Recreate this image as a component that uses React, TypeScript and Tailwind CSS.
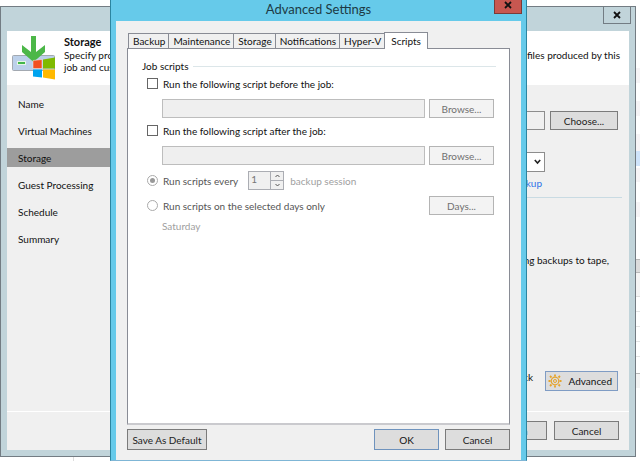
import React from "react";

const FONT = "font-['Lato','Open_Sans',sans-serif]";
const BTN =
  "flex shrink-0 items-center justify-center whitespace-nowrap border border-[#7b7b7b] bg-[#dddddd] leading-none text-[#222]";
const BTN_OFF =
  "flex h-[19px] w-[65px] shrink-0 items-center justify-center border border-[#b4b4b4] bg-[#f3f3f3] leading-none text-[#707070]";

const steps = ["Name", "Virtual Machines", "Storage", "Guest Processing", "Schedule", "Summary"];
const tabs = ["Backup", "Maintenance", "Storage", "Notifications", "Hyper-V"];

function StorageIcon() {
  return (
    <svg width="46" height="46" viewBox="0 0 46 46" aria-hidden="true">
      <rect x="1.500" y="20.500" width="42" height="15" rx="1" fill="#bcd0ea" stroke="#a3a9b1" />
      <rect x="6.500" y="26.500" width="8" height="3" fill="#43b649" stroke="#e6f5e6" />
      <path d="M20 1h5v16l9-7v7L22.500 27 11 17v-7l9 7z" fill="#4cb748" />
      <path d="M22 25.500l9-1v9h-9z" fill="#f25022" stroke="#f0f0f0" strokeWidth=".5" />
      <path d="M32 24.500l12-2v11H32z" fill="#7fba00" />
      <path d="M22 34.500h9v8l-9-1z" fill="#00a4ef" />
      <path d="M32 34.500h12v10l-12-2z" fill="#ffb900" />
    </svg>
  );
}

function GearIcon() {
  return (
    <svg width="14" height="14" viewBox="0 0 14 14" fill="none" stroke="#e5a42c" aria-hidden="true">
      <circle cx="7" cy="7" r="3.800" strokeWidth="1.200" />
      <circle cx="7" cy="7" r="1.500" strokeWidth="1" />
      <path d="M7 .5v2M7 11.500v2M.5 7h2M11.500 7h2M2 2l1.500 1.500M10.500 10.500L12 12M12 2l-1.500 1.500M3.500 10.500L2 12" strokeWidth="1.800" />
    </svg>
  );
}

function CloseGlyph() {
  return (
    <svg width="8" height="8" viewBox="0 0 8 8" stroke="#111" strokeWidth="1.800" aria-hidden="true">
      <path d="M1 1l6 6M7 1L1 7" />
    </svg>
  );
}

function ConsoleBehind() {
  return (
    <div className="flex h-full flex-col">
      <div className="ml-auto flex w-1 flex-col pt-[68px]">
        <div className="h-[15px] bg-[#f6f4f6]" />
        <div className="mt-[18px] h-[15px] bg-[#f6f4f6]" />
        <div className="mt-[18px] h-[17px] bg-[#f6f4f6]" />
        <div className="h-[15px] bg-[#cfe4fb]" />
        <div className="mt-[2px] h-[14px] bg-[#f6f4f6]" />
        <div className="mt-5 h-[15px] bg-[#f6f4f6]" />
        <div className="mt-[42px] h-[14px] border-y border-[#b9b9b9] bg-[#dcdcdc]" />
        <div className="h-6 border-b border-[#dddddd] bg-[#f4f4f4]" />
        <div className="h-[15px] border-b border-[#e4e4e4]" />
        <div className="h-[15px] border-b border-[#e4e4e4]" />
        <div className="h-[15px] border-b border-[#e4e4e4]" />
        <div className="h-[15px] border-b border-[#e4e4e4]" />
        <div className="h-[17px] border-b border-[#b9b9b9]" />
        <div className="h-[14px] bg-[#f4f4f4]" />
      </div>
      <div className="mt-auto h-1 w-[74px] border-r border-[#dddddd]" />
    </div>
  );
}

function ScriptRow({ id, label }: { id: string; label: string }) {
  return (
    <div>
      <div className="flex h-[13px] items-center gap-[5px]">
        <input id={id} type="checkbox" className="size-[11px] shrink-0 appearance-none border border-[#666] bg-white" />
        <label htmlFor={id}>{label}</label>
      </div>
      <div className="mt-[9px] flex gap-1 pl-[15px]">
        <input aria-label={label} disabled className="h-[19px] min-w-0 flex-1 border border-[#bdbdbd] bg-[#efefef]" />
        <button disabled className={BTN_OFF}>Browse...</button>
      </div>
    </div>
  );
}

function Wizard() {
  return (
    <section className="absolute top-[6px] right-[4px] left-0 flex h-[451px] flex-col border border-[#737c83] bg-[#c1d4da] px-[6px] pb-[6px]">
      <div className="flex h-6 shrink-0 justify-end">
        <button aria-label="Close wizard" className="-mt-px mr-[-2px] flex h-[18px] w-[28px] items-center justify-center border border-[#737c83]">
          <CloseGlyph />
        </button>
      </div>
      <header className="flex h-[54px] shrink-0 bg-white pl-1">
        <div className="w-[53px] shrink-0 pt-1">
          <StorageIcon />
        </div>
        <div className="min-w-0 flex-1 pt-1 pr-[9px] leading-3">
          <h1 className="text-[11px] leading-[14px] font-bold">Storage</h1>
          <div className="flex justify-between whitespace-nowrap">
            <span>Specify pro</span>
            <span>files produced by this</span>
          </div>
          <p>job and cus</p>
        </div>
      </header>
      <div className="flex min-h-0 flex-1 bg-[#f0f0f0]">
        <nav className="flex w-[110px] shrink-0 flex-col gap-2 pt-[9px]">
          {steps.map((s) => (
            <a
              key={s}
              href="#"
              className={
                s === "Storage"
                  ? "flex h-[19px] items-center bg-[#9d9d9d] pl-[11px]"
                  : "flex h-[19px] items-center pl-[11px]"
              }
            >
              {s}
            </a>
          ))}
        </nav>
        <div className="flex min-w-0 flex-1 flex-col pr-[11px] whitespace-nowrap">
          <div className="mt-[26px] flex gap-[5px]">
            <input aria-label="Backup proxy" className="h-[19px] min-w-0 flex-1 border border-[#8d8d8d] bg-[#f0f0f0]" />
            <button className={`${BTN} h-[19px] w-[68px]`}>Choose...</button>
          </div>
          <div className="mt-[22px] mr-[73px] flex">
            <div className="relative flex flex-1">
              <select aria-label="Backup repository" className="h-5 flex-1 appearance-none border border-[#8d8d8d] bg-white">
                <option></option>
              </select>
              <svg className="absolute top-[7px] right-[4px]" width="7" height="6" viewBox="0 0 7 6" fill="none" stroke="#222" strokeWidth="1.600" aria-hidden="true">
                <path d="M.8 1l2.700 3L6.200 1" />
              </svg>
            </div>
          </div>
          <a href="#" className="mt-[3px] mr-[76px] text-right leading-4 text-[#2f74e8]">backup</a>
          <hr className="mt-[6px] -mr-1 border-[#c9dbe3]" />
          <p className="mt-[54px] mr-[9px] text-right leading-4">ing backups to tape,</p>
          <div className="mt-[103px] flex items-start justify-end gap-3">
            <span className="leading-3">block</span>
            <button className="flex h-5 w-[73px] shrink-0 items-center justify-between border border-[#7f9cc4] bg-[#dddddd] pr-[5px] pl-[2px] leading-none">
              <GearIcon />
              Advanced
            </button>
          </div>
        </div>
      </div>
      <footer className="flex h-[39px] shrink-0 items-start justify-end gap-[7px] border-t border-white bg-[#f0f0f0] pt-[9px] pr-[10px]">
        <button className={`${BTN} h-[19px] w-[65px]`}>Finish</button>
        <button className={`${BTN} h-[19px] w-[65px]`}>Cancel</button>
      </footer>
    </section>
  );
}

function AdvancedSettings() {
  return (
    <section className="absolute top-0 right-[113px] bottom-0 left-[110px] flex flex-col border-x border-x-[#2c85a0] border-b border-b-[#7fb6d6] bg-[#66caea] px-[5px]">
      <div className="relative flex h-[21px] shrink-0 items-start justify-center">
        <h2 className="text-[13px] leading-[18px] text-[#1d3a45]">Advanced Settings</h2>
        <button aria-label="Close" className="absolute top-0 right-[-1px] flex h-[14px] w-[28px] items-center justify-center border border-t-0 border-[#7b3a38] bg-[#c75750] pb-1">
          <CloseGlyph />
        </button>
      </div>
      <div className="flex min-h-0 flex-1 flex-col bg-[#f0f0f0] px-[11px] pt-[11px] pb-[10px]">
        <div role="tablist" className="relative z-10 -mb-px flex h-[17px] shrink-0 items-end pl-px">
          {tabs.map((t) => (
            <button key={t} role="tab" className="-mr-px flex h-4 items-center border border-[#898c95] pr-[3px] pl-1 leading-none">
              {t}
            </button>
          ))}
          <button role="tab" aria-selected="true" className="h-[17px] border border-b-0 border-[#898c95] bg-white px-[6px] leading-[15px]">
            Scripts
          </button>
        </div>
        <div className="flex-1 border border-b-2 border-[#898c95] border-b-[#cacace] bg-white pt-[9px] pr-[13px] pl-[14px]">
          <div className="flex h-4 items-center gap-[5px]">
            <h3>Job scripts</h3>
            <hr className="flex-1 border-[#dce6e9]" />
          </div>
          <div className="pt-[3px] pr-[2px] pl-[5px]">
            <div className="flex flex-col gap-[6px]">
              <ScriptRow id="before" label="Run the following script before the job:" />
              <ScriptRow id="after" label="Run the following script after the job:" />
            </div>
            <div className="mt-[6px] flex h-[19px] items-center text-[#555]">
              <input id="every" type="radio" name="when" defaultChecked disabled className="mr-[5px] size-[11px] shrink-0 appearance-none rounded-full border border-[#aaa] bg-[#999] bg-clip-content p-[2px]" />
              <label htmlFor="every">Run scripts every</label>
              <div className="ml-[10px] flex h-[19px] w-9 border border-[#abadb3] bg-[#f0f0f0] text-[#777]">
                <input aria-label="Sessions" defaultValue="1" disabled className="h-[14px] min-w-0 flex-1 pl-[2px]" />
                <div className="flex w-[13px] flex-col border-l border-[#abadb3]">
                  <button disabled aria-label="Increase" className="flex flex-1 items-center justify-center border-b border-[#abadb3]">
                    <svg width="5" height="4" viewBox="0 0 5 4" fill="none" stroke="#555"><path d="M.5 3l2-2 2 2" /></svg>
                  </button>
                  <button disabled aria-label="Decrease" className="flex flex-1 items-center justify-center">
                    <svg width="5" height="4" viewBox="0 0 5 4" fill="none" stroke="#555"><path d="M.5 1l2 2 2-2" /></svg>
                  </button>
                </div>
              </div>
              <span className="ml-[6px] text-[#a0a0a0]">backup session</span>
            </div>
            <div className="mt-[6px] flex items-center text-[#555]">
              <input id="days" type="radio" name="when" disabled className="mr-[5px] size-[11px] shrink-0 appearance-none rounded-full border border-[#aaa] bg-white" />
              <label htmlFor="days" className="flex-1">Run scripts on the selected days only</label>
              <button disabled className={BTN_OFF}>Days...</button>
            </div>
            <p className="mt-[3px] pl-[15px] leading-4 text-[#a0a0a0]">Saturday</p>
          </div>
        </div>
        <div className="mt-1 flex shrink-0 gap-[6px]">
          <button className={`${BTN} mr-auto h-[21px] w-[80px]`}>Save As Default</button>
          <button className="flex h-[21px] w-[65px] items-center justify-center border border-[#6f93bd] bg-[#dddddd] leading-none">OK</button>
          <button className={`${BTN} h-[21px] w-[65px]`}>Cancel</button>
        </div>
      </div>
    </section>
  );
}

export default function App() {
  return (
    <main className={`relative h-screen overflow-hidden bg-white text-[10px] leading-4 text-[#111] ${FONT}`}>
      <ConsoleBehind />
      <Wizard />
      <AdvancedSettings />
    </main>
  );
}
